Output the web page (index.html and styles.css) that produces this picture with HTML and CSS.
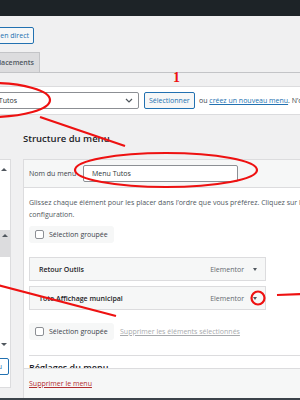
FILE: index.html
```html
<!DOCTYPE html>
<html lang="fr">
<head>
  <meta charset="UTF-8">
  <meta name="viewport" content="width=device-width, initial-scale=1.0">
  <title>Menus ‹ Administration</title>
  <link rel="stylesheet" href="styles.css">
</head>
<body>
  <div class="adminbar"></div>

  <div class="screen">
    <div class="wrap">
      <div class="page-head">
        <h1>Menus</h1>
        <a class="btn-live" href="#">Gérer en direct</a>
      </div>

      <nav class="tabs">
        <div class="tabs-inner">
          <a class="tab tab-active" href="#">Modifier les menus</a>
          <a class="tab" href="#">Gérer les emplacements</a>
        </div>
      </nav>

      <div class="manage-menus">
        <label class="manage-label">Sélectionnez un menu à modifier :</label>
        <div class="select">
          <span>Menu Tutos</span>
          <svg width="8" height="5" viewBox="0 0 8 5"><polyline points="1,1 4,4 7,1" fill="none" stroke="#50575e" stroke-width="1.2"/></svg>
        </div>
        <button class="btn">Sélectionner</button>
        <span class="or">ou <a href="#">créez un nouveau menu</a>. N’oubliez pas d’enregistrer vos modifications !</span>
      </div>

      <div class="columns">
        <div class="side">
          <h2>Ajouter des éléments de menu</h2>
          <div class="side-box">
            <div class="acc-head">Pages <span class="acc-arrow up"></span></div>
            <div class="acc-body">
              <div class="list-box">
                <div class="list-scroll"><span class="acc-arrow up"></span></div>
              </div>
              <div class="acc-head plain">Articles <span class="acc-arrow"></span></div>
              <div class="add-row"><span class="btn-add">Ajouter au menu</span></div>
            </div>
          </div>
        </div>

        <div class="main">
          <h2>Structure du menu</h2>
          <div class="panel">
            <div class="panel-head">
              <label class="name-label">Nom du menu</label>
              <input class="name-input" type="text" value="Menu Tutos">
            </div>

            <div class="panel-body">
              <p class="hint">Glissez chaque élément pour les placer dans l’ordre que vous préférez. Cliquez sur la flèche à droite de l’élément pour afficher d’autres options de<br>configuration.</p>

              <div class="bulk"><span class="check"></span>Sélection groupée</div>

              <ul class="menu-items">
                <li class="item">
                  <span class="item-title">Retour Outils</span>
                  <span class="item-type">Elementor</span>
                  <span class="item-toggle"></span>
                </li>
                <li class="item">
                  <span class="item-title">Toto Affichage municipal</span>
                  <span class="item-type">Elementor</span>
                  <span class="item-toggle"></span>
                </li>
              </ul>

              <div class="bulk-row">
                <div class="bulk"><span class="check"></span>Sélection groupée</div>
                <a class="remove-selected" href="#">Supprimer les éléments sélectionnés</a>
              </div>

              <div class="settings">
                <h3>Réglages du menu</h3>
              </div>
            </div>

            <div class="panel-foot">
              <a class="delete-menu" href="#">Supprimer le menu</a>
            </div>
          </div>
        </div>
      </div>
    </div>
  </div>

  <div class="bottom-edge"></div>

  <!-- annotations drawn over the screenshot -->
  <span class="step">1</span>
  <svg class="marks" width="300" height="400" viewBox="0 0 300 400">
    <g fill="none" stroke="#ee1111" stroke-width="2.2">
      <ellipse cx="-10" cy="100" rx="60" ry="17"/>
      <line x1="40" y1="117" x2="125" y2="146"/>
      <ellipse cx="166" cy="170" rx="91" ry="17"/>
      <line x1="-2" y1="285" x2="116" y2="316"/>
      <circle cx="258" cy="298" r="6.5"/>
      <line x1="277" y1="295" x2="302" y2="294"/>
    </g>
  </svg>
</body>
</html>
```

FILE: styles.css
```css
body {
  margin: 0;
  height: 400px;
  overflow: hidden;
  position: relative;
  display: flex;
  flex-direction: column;
  background-color: #f0f0f1;
  font-family: "Open Sans", "Liberation Sans", sans-serif;
  font-size: 7px;
  color: #3c434a;
}
a {
  color: #2271b1;
}
.adminbar {
  flex: none;
  height: 16px;
  background-color: #1d2327;
}
.screen {
  flex: 1;
  overflow: hidden;
}
.bottom-edge {
  flex: none;
  height: 2px;
  background-color: #3c434a;
}
.wrap {
  width: 600px;
  margin-left: -150px;
}

/* title row */
.page-head {
  width: 184px;
  height: 17px;
  margin-top: 11px;
  display: flex;
  justify-content: flex-end;
  align-items: center;
  gap: 6px;
}
.page-head h1 {
  margin: 0;
  font-size: 12px;
  font-weight: 400;
  color: #1d2327;
}
.btn-live {
  box-sizing: border-box;
  height: 17px;
  line-height: 15px;
  padding: 0 4px;
  border: 1px solid #2271b1;
  border-radius: 2px;
  background-color: #f6f7f7;
  text-decoration: none;
}

/* tabs */
.tabs {
  margin-top: 8px;
  border-bottom: 1px solid #c3c4c7;
}
.tabs-inner {
  width: 190px;
  display: flex;
  justify-content: flex-end;
  gap: 4px;
}
.tab {
  box-sizing: border-box;
  height: 20px;
  line-height: 19px;
  padding: 0 5px;
  border: 1px solid #c3c4c7;
  border-bottom: none;
  background-color: #dcdcde;
  color: #50575e;
  font-weight: 600;
  text-decoration: none;
}
.tab-active {
  background-color: #f0f0f1;
  color: #1d2327;
}

/* menu picker */
.manage-menus {
  box-sizing: border-box;
  height: 29px;
  margin-top: 13px;
  padding: 0 8px;
  display: flex;
  align-items: center;
  background-color: #fff;
  border: 1px solid #dcdcde;
  white-space: nowrap;
}
.manage-label {
  width: 116px;
  overflow: hidden;
}
.select {
  box-sizing: border-box;
  width: 168px;
  height: 17px;
  padding: 0 5px 0 4px;
  display: flex;
  align-items: center;
  justify-content: space-between;
  border: 1px solid #8c8f94;
  border-radius: 2px;
  color: #2c3338;
}
.btn {
  box-sizing: border-box;
  height: 17px;
  width: 52px;
  margin-left: 5px;
  padding: 0;
  border: 1px solid #2271b1;
  border-radius: 2px;
  background-color: #f6f7f7;
  color: #2271b1;
  font: inherit;
}
.or {
  margin-left: 4px;
}

/* columns */
.columns {
  margin-top: 17px;
  display: flex;
  align-items: flex-start;
}
.columns h2 {
  margin: 0 0 13px;
  height: 14px;
  line-height: 14px;
  font-size: 9.5px;
  font-weight: 600;
  color: #1d2327;
  white-space: nowrap;
}
.side {
  width: 161px;
  flex: none;
}
.side h2 {
  visibility: hidden;
}
.side-box {
  box-sizing: border-box;
  height: 229px;
  background-color: #fff;
  border: 1px solid #dcdcde;
}
.acc-head {
  height: 19px;
  padding: 0 3px 0 6px;
  display: flex;
  align-items: center;
  justify-content: space-between;
  color: #1d2327;
  font-weight: 600;
}
.acc-head.plain {
  margin-top: 78px;
}
.acc-arrow {
  width: 0;
  height: 0;
  border-left: 3px solid transparent;
  border-right: 3px solid transparent;
  border-top: 3px solid #50575e;
}
.acc-arrow.up {
  border-top: none;
  border-bottom: 3px solid #50575e;
}
.acc-body {
  padding: 51px 0 0;
}
.list-box {
  height: 27px;
  padding-left: 6px;
  display: flex;
  justify-content: flex-end;
}
.list-scroll {
  width: 10px;
  padding-top: 4px;
  display: flex;
  justify-content: center;
  background-color: #dcdcde;
}
.add-row {
  margin-top: 4px;
  display: flex;
  justify-content: flex-end;
  padding-right: 1px;
}
.btn-add {
  box-sizing: border-box;
  height: 17px;
  line-height: 15px;
  padding: 0 6px;
  border: 1px solid #2271b1;
  border-radius: 2px;
  color: #2271b1;
  background-color: #fff;
  white-space: nowrap;
}
.main {
  width: 420px;
  margin-left: 12px;
  flex: none;
}

/* menu structure panel */
.panel {
  background-color: #fff;
  border: 1px solid #dcdcde;
}
.panel-head {
  height: 27px;
  padding-left: 5px;
  display: flex;
  align-items: center;
  background-color: #f6f7f7;
  border-bottom: 1px solid #dcdcde;
}
.name-label {
  width: 54px;
  color: #3c434a;
}
.name-input {
  box-sizing: border-box;
  width: 155px;
  height: 17px;
  padding: 0 8px;
  border: 1px solid #8c8f94;
  border-radius: 2px;
  font: inherit;
  color: #2c3338;
}
.panel-body {
  height: 171px;
  padding: 9px 5px 0;
  overflow: hidden;
}
.hint {
  margin: 0;
  line-height: 12px;
  white-space: nowrap;
  color: #50575e;
}
.bulk {
  box-sizing: border-box;
  width: 85px;
  height: 17px;
  margin-top: 5px;
  padding-left: 6px;
  display: flex;
  align-items: center;
  gap: 5px;
  border-radius: 3px;
  background-color: #f6f7f7;
  color: #3c434a;
}
.check {
  box-sizing: border-box;
  width: 9px;
  height: 9px;
  border: 1px solid #8c8f94;
  border-radius: 2px;
  background-color: #fff;
}
.menu-items {
  list-style: none;
  margin: 14px 0 0;
  padding: 0;
}
.item {
  box-sizing: border-box;
  width: 237px;
  height: 24px;
  margin-bottom: 5px;
  padding: 0 8px 0 9px;
  display: flex;
  align-items: center;
  background-color: #f6f7f7;
  border: 1px solid #dcdcde;
}
.item-title {
  flex: 1;
  font-weight: 600;
  color: #1d2327;
}
.item-type {
  color: #646970;
}
.item-toggle {
  margin-left: 9px;
  width: 0;
  height: 0;
  border-left: 2.5px solid transparent;
  border-right: 2.5px solid transparent;
  border-top: 3px solid #50575e;
}
.bulk-row {
  margin-top: 13px;
  display: flex;
  align-items: center;
  gap: 6px;
}
.bulk-row .bulk {
  margin-top: 0;
}
.remove-selected {
  color: #a7aaad;
}
.settings {
  margin-top: 15px;
  border-top: 1px solid #dcdcde;
}
.settings h3 {
  margin: 5px 0 0;
  font-size: 9px;
  font-weight: 600;
  color: #1d2327;
}
.panel-foot {
  height: 29px;
  padding-left: 5px;
  display: flex;
  align-items: center;
  background-color: #f6f7f7;
  border-top: 1px solid #dcdcde;
}
.delete-menu {
  color: #b32d2e;
}

/* red annotations */
.marks {
  position: absolute;
  left: 0;
  top: 0;
  pointer-events: none;
}
.step {
  position: absolute;
  left: 173px;
  top: 70px;
  font-family: "Liberation Serif", serif;
  font-size: 14px;
  font-weight: 700;
  color: #ee1111;
}
```
